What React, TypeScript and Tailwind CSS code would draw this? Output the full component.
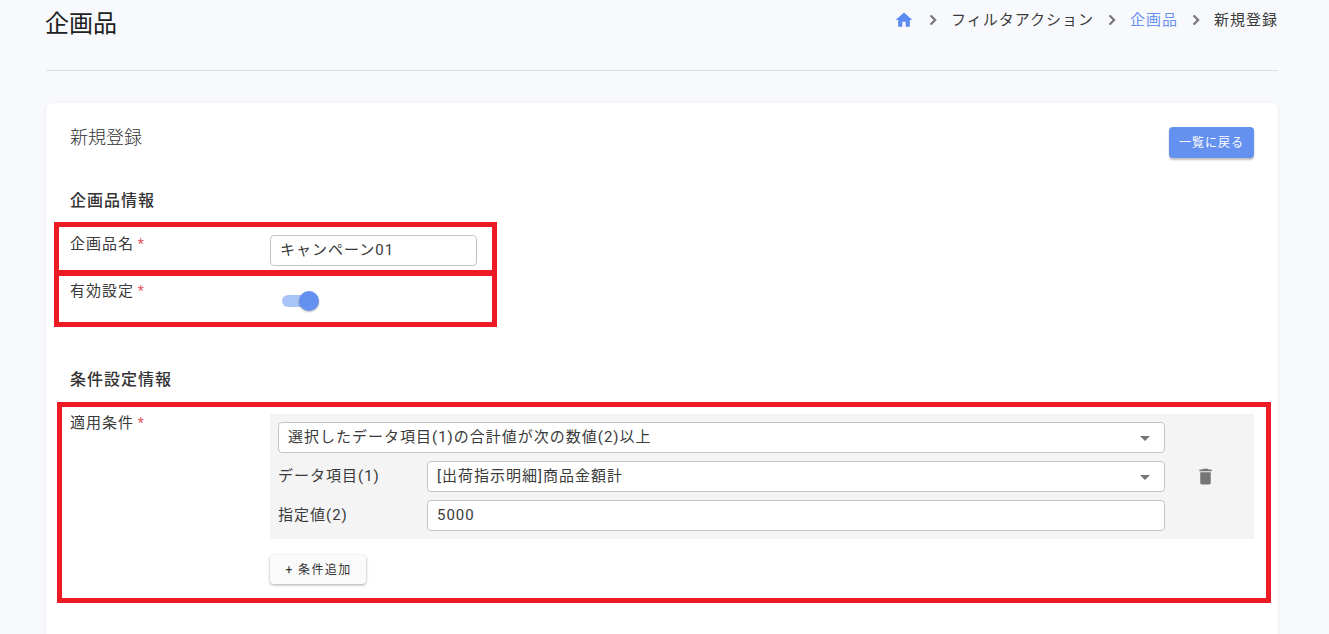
const font = '[font-family:Roboto,"Noto_Sans_CJK_JP",sans-serif]'

function Required({ children }: { children: string }) {
  return (
    <div className="-mt-[1px] w-[200px] shrink-0 text-[15px] leading-[20px] tracking-[1px] text-[#3a3a3a]">
      {children} <span className="-ml-[1px] text-[14px] text-[#e2585d]">*</span>
    </div>
  )
}

function Caret() {
  return (
    <svg viewBox="0 0 24 24" className="h-6 w-6 fill-[#757575]">
      <path d="M7 10l5 5 5-5z" />
    </svg>
  )
}

function Chevron() {
  return (
    <svg viewBox="0 0 24 24" className="mx-[8px] h-5 w-5 fill-[#757575] stroke-[#757575] stroke-[0.8]">
      <path d="M10 6L8.59 7.41 13.17 12l-4.58 4.59L10 18l6-6z" />
    </svg>
  )
}

function Field({ value, caret, className }: { value: string; caret?: boolean; className: string }) {
  return (
    <div
      className={`flex items-center justify-between rounded border border-[#c4c4c4] bg-white pl-[9px] pr-[7px] text-[15px] tracking-[1px] text-[#3a3a3a] ${className}`}
    >
      <span>{value}</span>
      {caret && <Caret />}
    </div>
  )
}

export default function App() {
  return (
    <div className={`relative h-[634px] w-[1329px] overflow-hidden bg-[#f8f9fd] pl-[46px] pr-[51px] ${font}`}>
      <header className="flex h-[71px] items-start justify-between border-b border-[#dcdde3]">
        <h1 className="-ml-[1px] mt-[6px] text-[24px] leading-[36px] text-[#212121]">企画品</h1>
        <nav className="mt-[10px] flex items-center text-[15px] leading-[20px] tracking-[1px] text-[#3a3a3a]">
          <svg viewBox="0 0 24 24" className="mr-[1px] h-5 w-5 fill-[#5e8bef]">
            <path d="M10 20v-6h4v6h5v-8h3L12 3 2 12h3v8z" />
          </svg>
          <Chevron />
          <span>フィルタアクション</span>
          <Chevron />
          <span className="text-[#6b92ef]">企画品</span>
          <Chevron />
          <span>新規登録</span>
        </nav>
      </header>

      <main className="mt-[32px] h-[600px] rounded-md bg-white px-6 pt-6 shadow-[0_1px_3px_rgba(60,64,90,0.12)]">
        <div className="flex items-start justify-between">
          <h2 className="mt-[1px] text-[18px] leading-[20px] font-light text-[#333]">新規登録</h2>
          <button className="h-[31px] w-[85px] rounded bg-[#6490f0] text-[12px] tracking-[1px] text-white shadow-[0_2px_2px_rgba(0,0,0,0.25)]">
            一覧に戻る
          </button>
        </div>

        <h3 className="mt-[31px] text-[16px] leading-[24px] font-medium tracking-[1px] text-[#333]">企画品情報</h3>

        <div className="mt-[22px] flex items-start">
          <Required>企画品名</Required>
          <Field value="キャンペーン01" className="h-[31px] w-[207px]" />
        </div>

        <div className="mt-[16px] flex items-start">
          <Required>有効設定</Required>
          <div className="relative ml-[12px] mt-[13px] h-[12px] w-[34px] rounded-full bg-[#a9c4f6]">
            <span className="absolute -right-[3px] -top-[4px] h-5 w-5 rounded-full bg-[#6490f0] shadow-[0_1px_2px_rgba(0,0,0,0.3)]" />
          </div>
        </div>

        <h3 className="mt-[61px] text-[16px] leading-[24px] font-medium tracking-[1px] text-[#333]">条件設定情報</h3>

        <div className="mt-[22px] flex items-start">
          <Required>適用条件</Required>
          <div className="w-[984px]">
            <div className="flex h-[125px] items-center bg-[#f4f4f4] pl-2">
              <div className="flex w-[887px] flex-col gap-[8px]">
                <Field value="選択したデータ項目(1)の合計値が次の数値(2)以上" caret className="h-[31px]" />
                <div className="flex items-center">
                  <span className="w-[149px] shrink-0 text-[15px] tracking-[1px] text-[#3a3a3a]">データ項目(1)</span>
                  <Field value="[出荷指示明細]商品金額計" caret className="h-[31px] flex-1" />
                </div>
                <div className="flex items-center">
                  <span className="w-[149px] shrink-0 text-[15px] tracking-[1px] text-[#3a3a3a]">指定値(2)</span>
                  <Field value="5000" className="h-[31px] flex-1" />
                </div>
              </div>
              <svg viewBox="0 0 24 24" className="ml-[30px] h-[21px] w-[21px] fill-[#757575]">
                <path d="M6 19c0 1.1.9 2 2 2h8c1.1 0 2-.9 2-2V7H6v12zM19 4h-3.5l-1-1h-5l-1 1H5v2h14V4z" />
              </svg>
            </div>
            <button className="mt-[16px] h-[29px] w-[96px] rounded bg-[#fafafa] pl-[1px] text-[12px] tracking-[1.4px] text-[#333] shadow-[0_1px_3px_rgba(0,0,0,0.35)]">
              + 条件追加
            </button>
          </div>
        </div>
      </main>

      {/* Red annotation frames drawn over the form */}
      <div className="absolute left-[54px] top-[222px] h-[54px] w-[443px] border-[5px] border-[#ed1c24]" />
      <div className="absolute left-[54px] top-[270px] h-[57px] w-[443px] border-[5px] border-[#ed1c24]" />
      <div className="absolute left-[57px] top-[402px] h-[201px] w-[1214px] border-[5px] border-[#ed1c24]" />
    </div>
  )
}
